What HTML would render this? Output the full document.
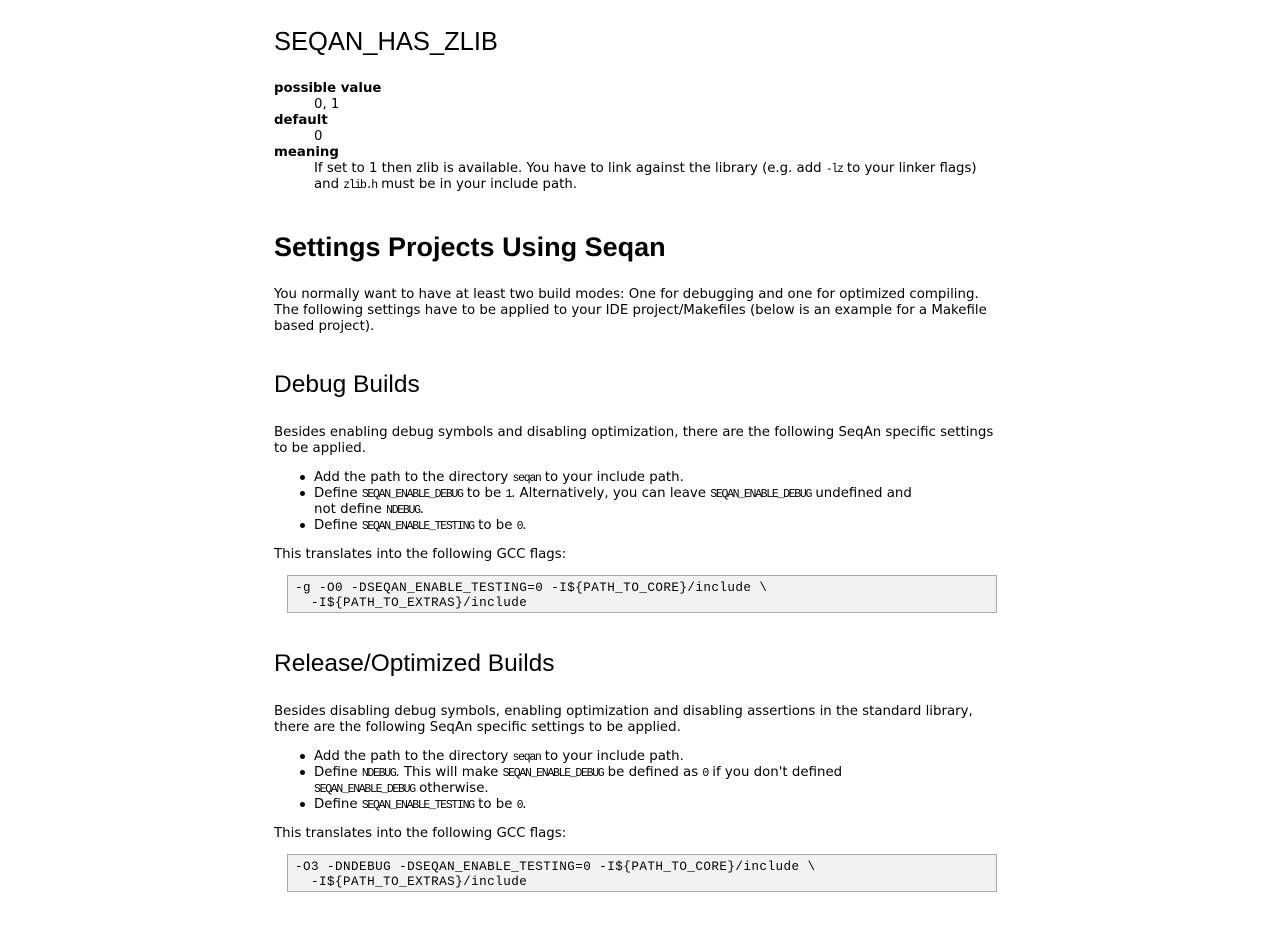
<!DOCTYPE html>
<html><head><meta charset="utf-8"><style>
body{margin:0;background:#fff;color:#000;width:1267px;height:936px;overflow:hidden;position:relative}
.a{position:absolute;white-space:nowrap}
.t{font-family:"DejaVu Sans",Verdana,sans-serif;font-size:13.35px;line-height:16px}
.c{font-family:"DejaVu Sans",sans-serif;font-size:13.3px;line-height:16px}
code{font-family:"Liberation Mono",monospace;font-size:11.5px;letter-spacing:-1.3px;line-height:1}
h1,h2,h3{margin:0;font-family:"Liberation Sans",Arial,sans-serif;font-weight:normal}
.pre{position:absolute;left:287px;width:708px;height:36px;background:#f2f2f2;border:1px solid #aaa;font-family:"Liberation Mono",monospace;font-size:12.6px;line-height:15px;letter-spacing:0.45px;white-space:pre;box-sizing:content-box}
.pre div{position:absolute;left:7px;top:5px}
ul{margin:0;padding:0;list-style:none}
li{position:relative;line-height:16px}
li:before{content:"";position:absolute;left:-14px;top:5px;width:5px;height:5px;border-radius:50%;background:#000}
</style></head><body>
<h1 class="a" style="left:274px;top:27px;font-size:25.5px;line-height:30px">SEQAN_HAS_ZLIB</h1>
<div class="a c" style="left:274px;top:81px">
<b>possible value</b><br><span style="margin-left:40px">0, 1</span><br><b>default</b><br><span style="margin-left:40px">0</span><br><b>meaning</b><br>
<span style="margin-left:40px">If set to 1 then zlib is available. You have to link against the library (e.g. add <code>-lz</code> to your linker flags)</span><br>
<span style="margin-left:40px">and <code>zlib.h</code> must be in your include path.</span></div>
<h2 class="a" style="left:274px;top:231px;font-size:27px;font-weight:bold;line-height:32px">Settings Projects Using Seqan</h2>
<div class="a t" style="left:274px;top:287px">You normally want to have at least two build modes: One for debugging and one for optimized compiling.<br>The following settings have to be applied to your IDE project/Makefiles (below is an example for a Makefile<br>based project).</div>
<h3 class="a" style="left:274px;top:371px;font-size:24.5px;line-height:28px">Debug Builds</h3>
<div class="a t" style="left:274px;top:425px">Besides enabling debug symbols and disabling optimization, there are the following SeqAn specific settings<br>to be applied.</div>
<ul class="a t" style="left:314px;top:470px">
<li>Add the path to the directory <code>seqan</code> to your include path.</li>
<li>Define <code>SEQAN_ENABLE_DEBUG</code> to be <code>1</code>. Alternatively, you can leave <code>SEQAN_ENABLE_DEBUG</code> undefined and<br>not define <code>NDEBUG</code>.</li>
<li>Define <code>SEQAN_ENABLE_TESTING</code> to be <code>0</code>.</li></ul>
<div class="a t" style="left:274px;top:547px">This translates into the following GCC flags:</div>
<div class="pre" style="top:575px"><div>-g -O0 -DSEQAN_ENABLE_TESTING=0 -I${PATH_TO_CORE}/include \
  -I${PATH_TO_EXTRAS}/include</div></div>
<h3 class="a" style="left:274px;top:650px;font-size:24.5px;line-height:28px">Release/Optimized Builds</h3>
<div class="a t" style="left:274px;top:704px">Besides disabling debug symbols, enabling optimization and disabling assertions in the standard library,<br>there are the following SeqAn specific settings to be applied.</div>
<ul class="a t" style="left:314px;top:749px">
<li>Add the path to the directory <code>seqan</code> to your include path.</li>
<li>Define <code>NDEBUG</code>. This will make <code>SEQAN_ENABLE_DEBUG</code> be defined as <code>0</code> if you don't defined<br><code>SEQAN_ENABLE_DEBUG</code> otherwise.</li>
<li>Define <code>SEQAN_ENABLE_TESTING</code> to be <code>0</code>.</li></ul>
<div class="a t" style="left:274px;top:826px">This translates into the following GCC flags:</div>
<div class="pre" style="top:854px"><div>-O3 -DNDEBUG -DSEQAN_ENABLE_TESTING=0 -I${PATH_TO_CORE}/include \
  -I${PATH_TO_EXTRAS}/include</div></div>
</body></html>
